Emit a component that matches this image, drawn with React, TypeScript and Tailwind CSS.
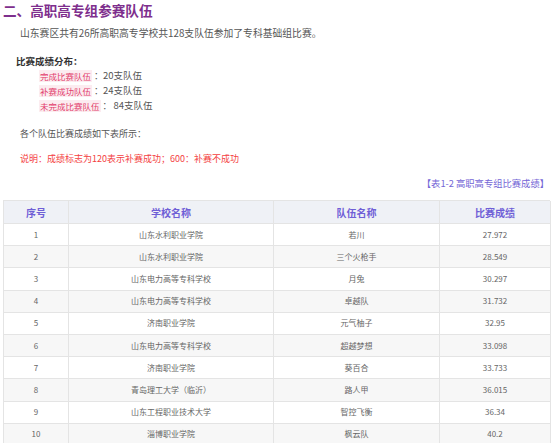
import React from "react";

const rows: [string, string, string, string][] = [
  ["1", "山东水利职业学院", "若川", "27.972"],
  ["2", "山东水利职业学院", "三个火枪手", "28.549"],
  ["3", "山东电力高等专科学校", "月兔", "30.297"],
  ["4", "山东电力高等专科学校", "卓越队", "31.732"],
  ["5", "济南职业学院", "元气柚子", "32.95"],
  ["6", "山东电力高等专科学校", "超越梦想", "33.098"],
  ["7", "济南职业学院", "葵百合", "33.733"],
  ["8", "青岛理工大学（临沂）", "路人甲", "36.015"],
  ["9", "山东工程职业技术大学", "智控飞衡", "36.34"],
  ["10", "淄博职业学院", "枫云队", "40.2"],
];

const font = { fontFamily: '"Noto Sans CJK SC", "Noto Sans", sans-serif' };

function Label({ children }: { children: React.ReactNode }) {
  return (
    <span className="inline-block h-[12px] leading-[12px] px-[1px] bg-[#fcecf0] text-[#e23d6c] text-[8.5px]">
      {children}
    </span>
  );
}

export default function App() {
  return (
    <div className="w-[553px] h-[443px] overflow-hidden bg-white pl-[3px] pr-[3px]" style={font}>
      <h2 className="h-[20px] leading-[20px] text-[13.6px] font-bold text-[#7e2f8d]">
        二、高职高专组参赛队伍
      </h2>
      <p className="mt-[6px] pl-[17px] h-[14px] leading-[14px] text-[9.8px] text-[#555]">
        山东赛区共有26所高职高专学校共128支队伍参加了专科基础组比赛。
      </p>
      <p className="mt-[14px] pl-[13px] h-[14px] leading-[14px] text-[9.5px] font-bold text-[#333]">
        比赛成绩分布：
      </p>
      <div className="pl-[36px] text-[9px] text-[#555]">
        <div className="h-[15px] leading-[15px] flex items-center">
          <Label>完成比赛队伍</Label>
          <span className="ml-[2px]">：</span>
          <span className="text-[9.5px]">20支队伍</span>
        </div>
        <div className="h-[15px] leading-[15px] flex items-center">
          <Label>补赛成功队伍</Label>
          <span className="ml-[2px]">：</span>
          <span className="text-[9.5px]">24支队伍</span>
        </div>
        <div className="h-[15px] leading-[15px] flex items-center">
          <Label>未完成比赛队伍</Label>
          <span className="ml-[2px]">：</span>
          <span className="text-[9.5px] ml-[2px]">84支队伍</span>
        </div>
      </div>
      <p className="mt-[14px] pl-[17px] h-[14px] leading-[14px] text-[9px] text-[#555]">
        各个队伍比赛成绩如下表所示：
      </p>
      <p className="mt-[11px] pl-[17px] h-[14px] leading-[14px] text-[9px] text-[#f43f3f]">
        说明：成绩标志为120表示补赛成功；600：补赛不成功
      </p>
      <p className="mt-[10px] h-[14px] leading-[14px] text-[9.3px] text-[#7466d6] text-right pr-[1px]">
        【表1-2 高职高专组比赛成绩】
      </p>
      <div className="mt-[10px] w-[547px] border-l border-t border-[#e4e4e4]">
        <div className="grid grid-cols-[65px_205px_166px_111px] h-[23px] bg-[#eff1f6] text-[10px] font-bold text-[#6f5fd6]">
          {["序号", "学校名称", "队伍名称", "比赛成绩"].map((h) => (
            <div key={h} className="flex items-center justify-center border-r border-b border-[#e4e4e4]">
              {h}
            </div>
          ))}
        </div>
        {rows.map((r, i) => (
          <div
            key={r[0]}
            className={`grid grid-cols-[65px_205px_166px_111px] h-[22.2px] text-[8px] text-[#666] ${
              i % 2 === 1 ? "bg-[#f7f7f7]" : "bg-white"
            }`}
          >
            {r.map((c, j) => (
              <div key={j} className="flex items-center justify-center border-r border-b border-[#e4e4e4]">
                {c}
              </div>
            ))}
          </div>
        ))}
      </div>
    </div>
  );
}
